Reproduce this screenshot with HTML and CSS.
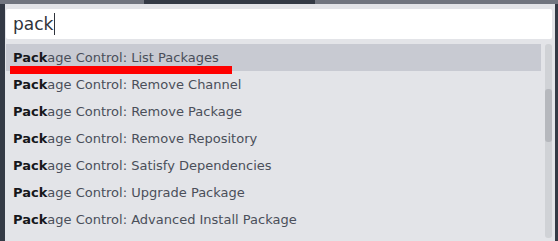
FILE: index.html
```html
<!DOCTYPE html>
<html>
<head>
<meta charset="utf-8">
<link rel="stylesheet" href="styles.css">
</head>
<body>
<div class="tabs">
  <div class="tab tab-a"></div>
  <div class="tab tab-b"></div>
  <div class="tab tab-c"></div>
</div>
<div class="window">
  <div class="panel">
    <div class="input"><span class="query">pack</span><span class="caret"></span></div>
    <div class="results">
      <ul class="list">
        <li class="row selected"><b>Pack</b>age Control: List Packages</li>
        <li class="row"><b>Pack</b>age Control: Remove Channel</li>
        <li class="row"><b>Pack</b>age Control: Remove Package</li>
        <li class="row"><b>Pack</b>age Control: Remove Repository</li>
        <li class="row"><b>Pack</b>age Control: Satisfy Dependencies</li>
        <li class="row"><b>Pack</b>age Control: Upgrade Package</li>
        <li class="row"><b>Pack</b>age Control: Advanced Install Package</li>
      </ul>
      <div class="scrollbar"><div class="thumb"></div></div>
    </div>
  </div>
</div>
<div class="marker"></div>
</body>
</html>
```
FILE: styles.css
```css
html, body {
  margin: 0;
  padding: 0;
}
body {
  width: 558px;
  height: 241px;
  overflow: hidden;
  background: #343a45;
  font-family: "DejaVu Sans", sans-serif;
  position: relative;
}
.tabs {
  display: flex;
  height: 4px;
}
.tab-a { width: 144px; background: #71757f; }
.tab-b { width: 171px; background: #343a45; }
.tab-c { flex: 1; background: #71757f; }
.window {
  display: flex;
  height: 237px;
}
.panel {
  flex: 1;
  margin: 0 3px 0 5px;
  background: #e3e4e8;
  padding: 5px 3px 0 1px;
  box-sizing: border-box;
}
.input {
  height: 30px;
  background: #ffffff;
  border-radius: 2px;
  display: flex;
  align-items: center;
  padding-left: 7px;
}
.query {
  font-size: 17px;
  color: #2f333b;
  line-height: 30px;
}
.caret {
  width: 1px;
  height: 22px;
  background: #2f333b;
  margin-left: 1px;
}
.results {
  display: flex;
  gap: 4px;
  margin-top: 5px;
}
.list {
  list-style: none;
  margin: 0;
  padding: 0;
  width: 535px;
}
.row {
  box-sizing: border-box;
  height: 27px;
  padding-top: 0.5px;
  line-height: 26.5px;
  padding-left: 7px;
  font-size: 13px;
  color: #4a4f5a;
  white-space: nowrap;
}
.row b {
  color: #16181c;
  font-weight: bold;
}
.selected {
  background: #c8cad2;
}
.scrollbar {
  width: 7px;
  height: 194px;
  background: #d0d2d6;
  border-radius: 3px;
  padding-top: 45px;
  box-sizing: border-box;
}
.thumb {
  height: 53px;
  background: #b6b8bd;
  border-radius: 3px;
}
.marker {
  position: absolute;
  left: 10px;
  top: 66px;
  width: 222px;
  height: 8px;
  background: #ff0000;
}
```
